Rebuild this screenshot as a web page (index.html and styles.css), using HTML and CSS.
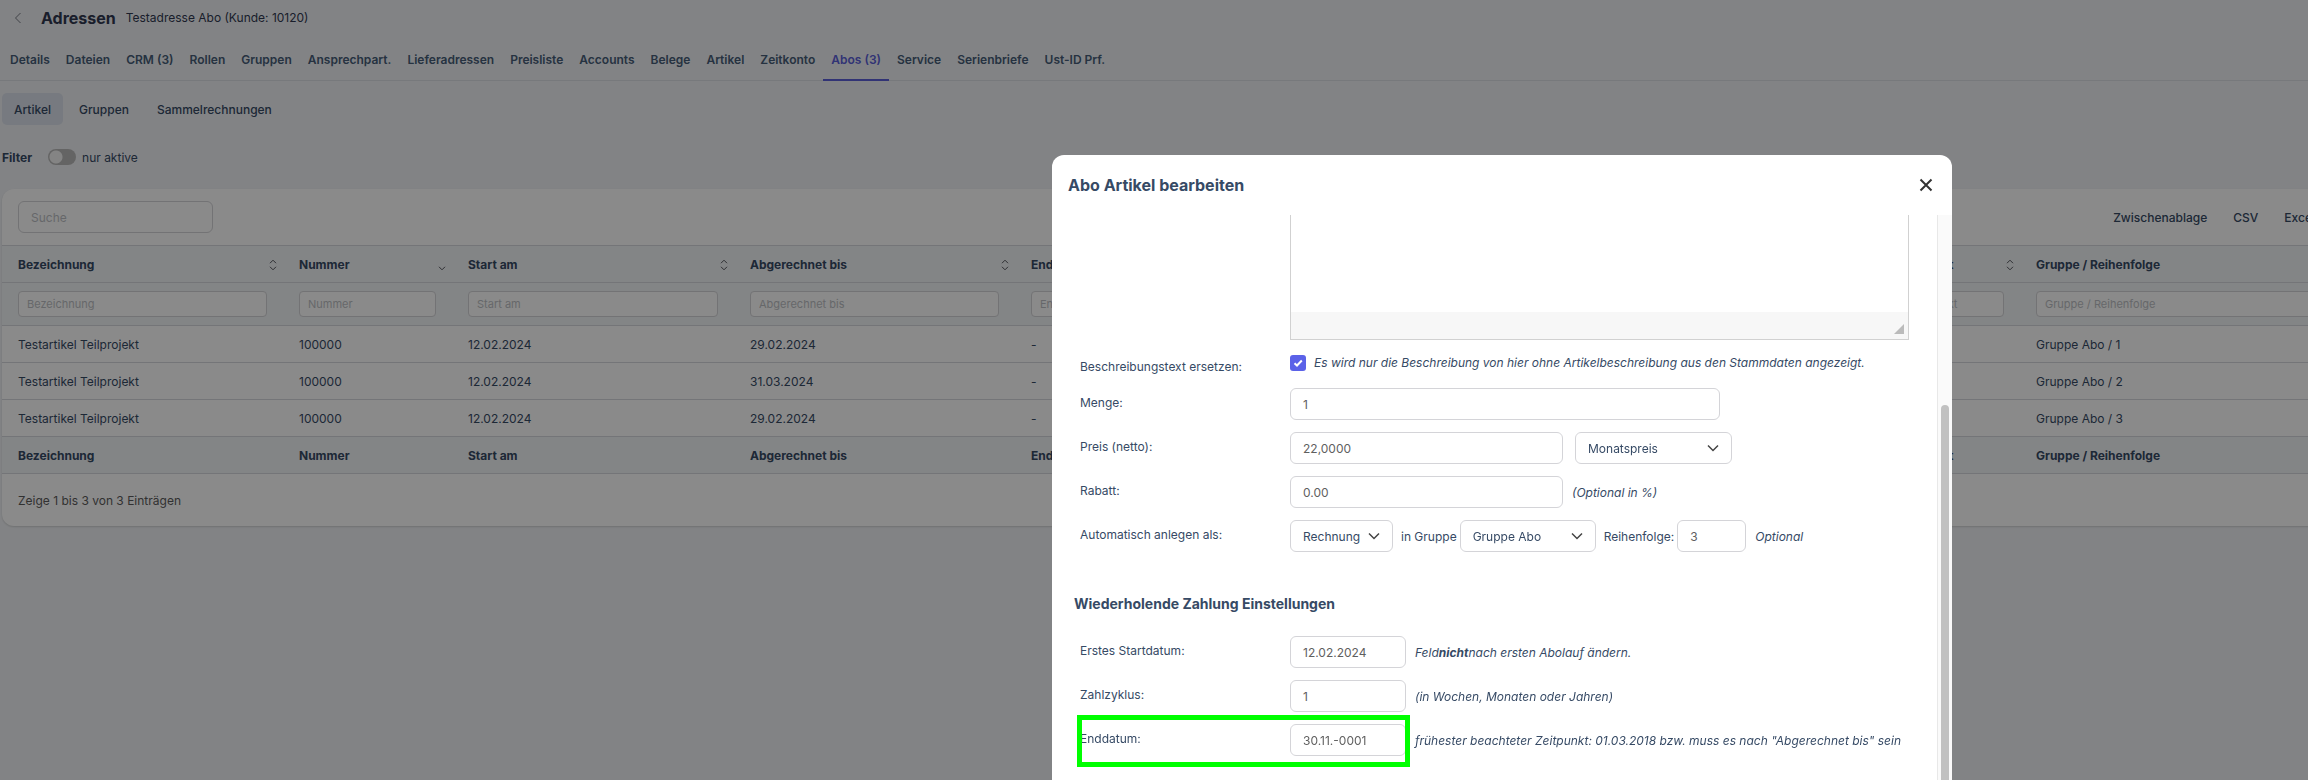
FILE: index.html
```html
<!DOCTYPE html>
<html lang="de">
<head>
    <meta charset="UTF-8">
    <title>Adressen - Abos</title>
    <link rel="stylesheet" href="styles.css">
</head>
<body>
<svg class="symbols" aria-hidden="true">
    <symbol id="sort" viewBox="0 0 8 12"><path d="M1 4.2 4 1.2 7 4.2M1 7.8 4 10.8 7 7.8"/></symbol>
    <symbol id="sort-down" viewBox="0 0 8 12"><path d="M1 7.8 4 10.8 7 7.8"/></symbol>
    <symbol id="chevron" viewBox="0 0 12 8"><path d="M1 1.500 6 6.500 11 1.500"/></symbol>
</svg>

<div class="page">
    <header class="page-head">
        <button class="back" aria-label="Zurück">
            <svg viewBox="0 0 8 12"><path d="M6.500 1 1.500 6 6.500 11"/></svg>
        </button>
        <h1>Adressen</h1>
        <span class="customer">Testadresse Abo (Kunde: 10120)</span>
    </header>

    <nav class="tabs">
        <a href="#">Details</a>
        <a href="#">Dateien</a>
        <a href="#">CRM (3)</a>
        <a href="#">Rollen</a>
        <a href="#">Gruppen</a>
        <a href="#">Ansprechpart.</a>
        <a href="#">Lieferadressen</a>
        <a href="#">Preisliste</a>
        <a href="#">Accounts</a>
        <a href="#">Belege</a>
        <a href="#">Artikel</a>
        <a href="#">Zeitkonto</a>
        <a href="#" class="active">Abos (3)</a>
        <a href="#">Service</a>
        <a href="#">Serienbriefe</a>
        <a href="#">Ust-ID Prf.</a>
    </nav>

    <nav class="subtabs">
        <a href="#" class="active">Artikel</a>
        <a href="#">Gruppen</a>
        <a href="#">Sammelrechnungen</a>
    </nav>

    <div class="filter">
        <strong>Filter</strong>
        <input type="checkbox" class="switch" id="nur-aktive">
        <label for="nur-aktive">nur aktive</label>
    </div>

    <section class="card">
        <div class="toolbar">
            <input type="search" class="field search" placeholder="Suche" aria-label="Suche">
            <div class="exports">
                <button>Zwischenablage</button>
                <button>CSV</button>
                <button>Excel</button>
            </div>
        </div>
        <table>
            <colgroup>
                <col class="col-m"><col class="col-s"><col class="col-l"><col class="col-m"><col class="col-m">
                <col class="col-s"><col class="col-m"><col class="col-xs"><col class="col-xxs"><col>
            </colgroup>
            <thead>
                <tr>
                    <th><div class="th">Bezeichnung <svg><use href="#sort"/></svg></div></th>
                    <th><div class="th">Nummer <svg><use href="#sort-down"/></svg></div></th>
                    <th><div class="th">Start am <svg><use href="#sort"/></svg></div></th>
                    <th><div class="th">Abgerechnet bis <svg><use href="#sort"/></svg></div></th>
                    <th><div class="th">Enddatum <svg><use href="#sort"/></svg></div></th>
                    <th><div class="th">Preis <svg><use href="#sort"/></svg></div></th>
                    <th><div class="th">Rabatt <svg><use href="#sort"/></svg></div></th>
                    <th><div class="th">Menge <svg><use href="#sort"/></svg></div></th>
                    <th><div class="th">Projekt <svg><use href="#sort"/></svg></div></th>
                    <th><div class="th">Gruppe / Reihenfolge</div></th>
                </tr>
                <tr class="filters">
                    <td><input placeholder="Bezeichnung" aria-label="Bezeichnung"></td>
                    <td><input placeholder="Nummer" aria-label="Nummer"></td>
                    <td><input placeholder="Start am" aria-label="Start am"></td>
                    <td><input placeholder="Abgerechnet bis" aria-label="Abgerechnet bis"></td>
                    <td><input placeholder="Enddatum" aria-label="Enddatum"></td>
                    <td><input placeholder="Preis" aria-label="Preis"></td>
                    <td><input placeholder="Rabatt" aria-label="Rabatt"></td>
                    <td><input placeholder="Menge" aria-label="Menge"></td>
                    <td><input placeholder="Projekt" aria-label="Projekt"></td>
                    <td><input placeholder="Gruppe / Reihenfolge" aria-label="Gruppe / Reihenfolge"></td>
                </tr>
            </thead>
            <tbody>
                <tr><td>Testartikel Teilprojekt</td><td>100000</td><td>12.02.2024</td><td>29.02.2024</td><td>-</td><td></td><td></td><td></td><td></td><td>Gruppe Abo / 1</td></tr>
                <tr><td>Testartikel Teilprojekt</td><td>100000</td><td>12.02.2024</td><td>31.03.2024</td><td>-</td><td></td><td></td><td></td><td></td><td>Gruppe Abo / 2</td></tr>
                <tr><td>Testartikel Teilprojekt</td><td>100000</td><td>12.02.2024</td><td>29.02.2024</td><td>-</td><td></td><td></td><td></td><td></td><td>Gruppe Abo / 3</td></tr>
            </tbody>
            <tfoot>
                <tr><th>Bezeichnung</th><th>Nummer</th><th>Start am</th><th>Abgerechnet bis</th><th>Enddatum</th><th>Preis</th><th>Rabatt</th><th>Menge</th><th>Projekt</th><th>Gruppe / Reihenfolge</th></tr>
            </tfoot>
        </table>
        <div class="card-foot">Zeige 1 bis 3 von 3 Einträgen</div>
    </section>
</div>

<div class="overlay">
    <div class="modal" role="dialog" aria-labelledby="modal-title">
        <div class="modal-head">
            <h2 id="modal-title">Abo Artikel bearbeiten</h2>
            <button class="close" aria-label="Schließen">
                <svg viewBox="0 0 14 14"><path d="M1.500 1.500 12.500 12.500M12.500 1.500 1.500 12.500"/></svg>
            </button>
        </div>
        <div class="modal-body">
            <form class="form">
                <div class="editor">
                    <textarea aria-label="Beschreibung"></textarea>
                    <div class="editor-foot"><svg viewBox="0 0 10 10"><path d="M10 0V10H0Z"/></svg></div>
                </div>

                <div class="row row-check">
                    <label for="ersetzen">Beschreibungstext ersetzen:</label>
                    <div class="controls">
                        <input type="checkbox" class="check" id="ersetzen" checked>
                        <em>Es wird nur die Beschreibung von hier ohne Artikelbeschreibung aus den Stammdaten angezeigt.</em>
                    </div>
                </div>
                <div class="row">
                    <label for="menge">Menge:</label>
                    <div class="controls"><input class="field w-xl" id="menge" value="1"></div>
                </div>
                <div class="row">
                    <label for="preis">Preis (netto):</label>
                    <div class="controls">
                        <input class="field w-l" id="preis" value="22,0000">
                        <span class="select w-m gap">
                            <select class="field" aria-label="Preisart"><option>Monatspreis</option></select>
                            <svg><use href="#chevron"/></svg>
                        </span>
                    </div>
                </div>
                <div class="row">
                    <label for="rabatt">Rabatt:</label>
                    <div class="controls">
                        <input class="field w-l" id="rabatt" value="0.00">
                        <em>(Optional in %)</em>
                    </div>
                </div>
                <div class="row">
                    <label for="anlegen">Automatisch anlegen als:</label>
                    <div class="controls">
                        <span class="select w-xs">
                            <select class="field" id="anlegen"><option>Rechnung</option></select>
                            <svg><use href="#chevron"/></svg>
                        </span>
                        <label class="inner" for="gruppe">in Gruppe</label>
                        <span class="select w-s">
                            <select class="field" id="gruppe"><option>Gruppe Abo</option></select>
                            <svg><use href="#chevron"/></svg>
                        </span>
                        <label class="inner" for="reihenfolge">Reihenfolge:</label>
                        <input class="field w-xxs" id="reihenfolge" value="3">
                        <em>Optional</em>
                    </div>
                </div>

                <h3>Wiederholende Zahlung Einstellungen</h3>

                <div class="row">
                    <label for="start">Erstes Startdatum:</label>
                    <div class="controls">
                        <input class="field w-date" id="start" value="12.02.2024">
                        <em>Feld<b>nicht</b>nach ersten Abolauf ändern.</em>
                    </div>
                </div>
                <div class="row">
                    <label for="zyklus">Zahlzyklus:</label>
                    <div class="controls">
                        <input class="field w-date" id="zyklus" value="1">
                        <em>(in Wochen, Monaten oder Jahren)</em>
                    </div>
                </div>
                <div class="row marked">
                    <label for="ende">Enddatum:</label>
                    <div class="controls">
                        <input class="field w-date" id="ende" value="30.11.-0001">
                        <em>frühester beachteter Zeitpunkt: 01.03.2018 bzw. muss es nach "Abgerechnet bis" sein</em>
                    </div>
                </div>
            </form>
            <div class="scrollbar"><div class="thumb"></div></div>
        </div>
    </div>
</div>
</body>
</html>
```

FILE: styles.css
```css
*, *::after {
    box-sizing: border-box;
}

body {
    margin: 0;
    height: 100vh;
    overflow: hidden;
    background: #f1f3f6;
    color: #364a65;
    font-family: Inter, "Liberation Sans", sans-serif;
    font-size: 12px;
    line-height: 16px;
}

h1, h2, h3 {
    margin: 0;
    font-weight: 700;
}

h1, h2 {
    font-size: 16px;
    line-height: 20px;
}

a {
    color: inherit;
    text-decoration: none;
}

button {
    padding: 0;
    border: 0;
    background: none;
    color: inherit;
    font: inherit;
}

svg {
    fill: none;
    stroke: #55585e;
    stroke-width: 1.5;
}

.symbols {
    display: none;
}

/* page */
.page {
    padding-left: 2px;
}

.page-head {
    display: flex;
    align-items: center;
    height: 35px;
    padding-left: 12px;
}

.page-head h1 {
    margin: 0 10px 0 19px;
    color: #303850;
}

.back {
    display: flex;
}

.back svg {
    width: 8px;
    height: 12px;
    stroke: #777b84;
    stroke-width: 1;
}

.customer {
    color: #303850;
}

.tabs {
    display: flex;
    padding-top: 5px;
    margin-left: -2px;
    padding-left: 2px;
    border-bottom: 1px solid #dcdfe5;
    color: #465d78;
    font-weight: 600;
}

.tabs a {
    padding: 12px 8px 11px;
    margin-bottom: -1px;
    border-bottom: 2px solid transparent;
}

.tabs .active {
    border-color: #5b5fd8;
    color: #5b5fd8;
}

.subtabs {
    display: flex;
    gap: 4px;
    margin-top: 12px;
    font-weight: 500;
}

.subtabs a {
    padding: 9px 12px 7px;
    border-radius: 5px;
}

.subtabs .active {
    background: #dce1ec;
}

.filter {
    display: flex;
    align-items: center;
    height: 24px;
    margin: 20px 0;
}

.filter strong,
.filter label {
    padding-top: 2px;
}

.switch {
    appearance: none;
    width: 28px;
    height: 16px;
    margin: 0 6px 0 16px;
    border-radius: 8px;
    background: radial-gradient(circle at 8px 8px, #f4f4f4 6px, transparent 7px) #b9b9b9;
}

/* table card */
.card {
    width: 2329px;
    border-radius: 12px;
    background: #fff;
    box-shadow: 0 1px 2px rgba(0, 0, 0, .15);
}

.toolbar {
    display: flex;
    align-items: center;
    justify-content: space-between;
    height: 57px;
    padding: 0 16px;
    border-bottom: 1px solid #d7d9de;
}

.exports {
    display: flex;
    gap: 26px;
    padding-top: 2px;
    font-weight: 500;
}

.field {
    width: 100%;
    height: 32px;
    margin: 0;
    padding: 1px 12px 0;
    border: 1px solid #d4d4d8;
    border-radius: 6px;
    background: #fff;
    color: #5f5f5f;
    font: inherit;
}

.search {
    width: 195px;
}

::placeholder {
    color: #bdbfc4;
    opacity: 1;
}

table {
    width: 100%;
    table-layout: fixed;
    border-collapse: separate;
    border-spacing: 0;
}

.col-l { width: 282px; }
.col-m { width: 281px; }
.col-s { width: 169px; }
.col-xs { width: 150px; }
.col-xxs { width: 124px; }

th, td {
    height: 37px;
    padding: 2px 16px 0;
    border-bottom: 1px solid #d7d9de;
    text-align: left;
}

th, .filters td {
    background: #f3f5f8;
}

thead th {
    padding-right: 6px;
}

.th {
    display: flex;
    align-items: center;
    justify-content: space-between;
}

.th svg {
    width: 8px;
    height: 12px;
    stroke-width: 1;
}

.filters td {
    height: 43px;
    padding-top: 0;
}

.filters input {
    display: block;
    width: 100%;
    height: 26px;
    padding: 0 8px;
    border: 1px solid #d4d4d8;
    border-radius: 4px;
    background: #fff;
    font: inherit;
    font-size: 11px;
}

.card-foot {
    padding: 19px 16px 17px;
    color: #5c5c5c;
}

/* modal */
.overlay {
    position: fixed;
    inset: 0;
    display: flex;
    justify-content: flex-end;
    padding: 155px 356px 0 0;
    background: rgba(0, 0, 0, .46);
}

.modal {
    display: flex;
    flex-direction: column;
    width: 900px;
    border-radius: 12px 12px 0 0;
    background: #fff;
}

.modal-head {
    display: flex;
    align-items: center;
    justify-content: space-between;
    height: 60px;
    padding: 0 19px 0 16px;
}

.close {
    display: flex;
}

.close svg {
    width: 14px;
    height: 14px;
    stroke: #333;
    stroke-width: 2;
}

.modal-body {
    display: flex;
    flex: 1;
    min-height: 0;
    overflow: hidden;
}

.form {
    flex: 1;
    padding: 0 28px 0 22px;
}

.editor {
    margin: 0 0 9px 216px;
    border: 1px solid #d1d1d1;
    border-top: 0;
}

.editor textarea {
    display: block;
    width: 100%;
    height: 97px;
    border: 0;
    resize: none;
}

.editor-foot {
    display: flex;
    align-items: flex-end;
    justify-content: flex-end;
    height: 27px;
    padding: 5px 4px;
    background: #f7f7f7;
}

.editor-foot svg {
    width: 10px;
    height: 10px;
    fill: #bbb;
    stroke: none;
}

.row {
    display: grid;
    grid-template-columns: 210px 1fr;
    padding: 6px 0 6px 6px;
}

.row > label {
    padding-top: 7px;
}

.controls {
    display: flex;
    align-items: center;
}

.controls em {
    padding-top: 1px;
    margin-left: 9px;
    white-space: nowrap;
}

.row-check {
    height: 33px;
    padding-bottom: 0;
}

.row-check > label {
    padding-top: 4px;
}

.row-check .controls {
    align-items: flex-start;
}

.row-check em {
    padding-top: 0;
    margin-left: 8px;
}

.check {
    appearance: none;
    width: 16px;
    height: 16px;
    margin: 0;
    border-radius: 3px;
    background: #5b62e8 url("data:image/svg+xml,%3Csvg xmlns='http://www.w3.org/2000/svg' viewBox='0 0 16 16'%3E%3Cpath d='M4.500 8.200 7 10.500 11.800 5.500' fill='none' stroke='white' stroke-width='2'/%3E%3C/svg%3E");
}

.select {
    position: relative;
}

.select select {
    appearance: none;
    color: inherit;
}

.select svg {
    position: absolute;
    top: 12px;
    right: 13px;
    width: 12px;
    height: 8px;
    stroke: #444;
    pointer-events: none;
}

.gap { margin-left: 12px; }

.inner {
    padding-top: 1px;
    margin: 0 3px 0 8px;
}

.w-xl { width: 430px; }
.w-l { width: 273px; }
.w-m { width: 157px; }
.w-s { width: 136px; }
.w-date { width: 116px; }
.w-xs { width: 103px; }
.w-xxs { width: 69px; }

h3 {
    padding: 36px 0 16px;
    font-size: 14px;
    line-height: 20px;
}

/* green frame over the end date */
.marked {
    position: relative;
}

.marked::after {
    content: "";
    position: absolute;
    top: -3px;
    left: 3px;
    width: 333px;
    height: 52px;
    border: 5px solid #0f0;
}

.scrollbar {
    width: 15px;
    padding: 190px 3px 0;
    border-left: 1px solid #e8e8e8;
    background: #fafafa;
}

.thumb {
    height: 100%;
    border-radius: 4px 4px 0 0;
    background: #c1c1c1;
}
```
